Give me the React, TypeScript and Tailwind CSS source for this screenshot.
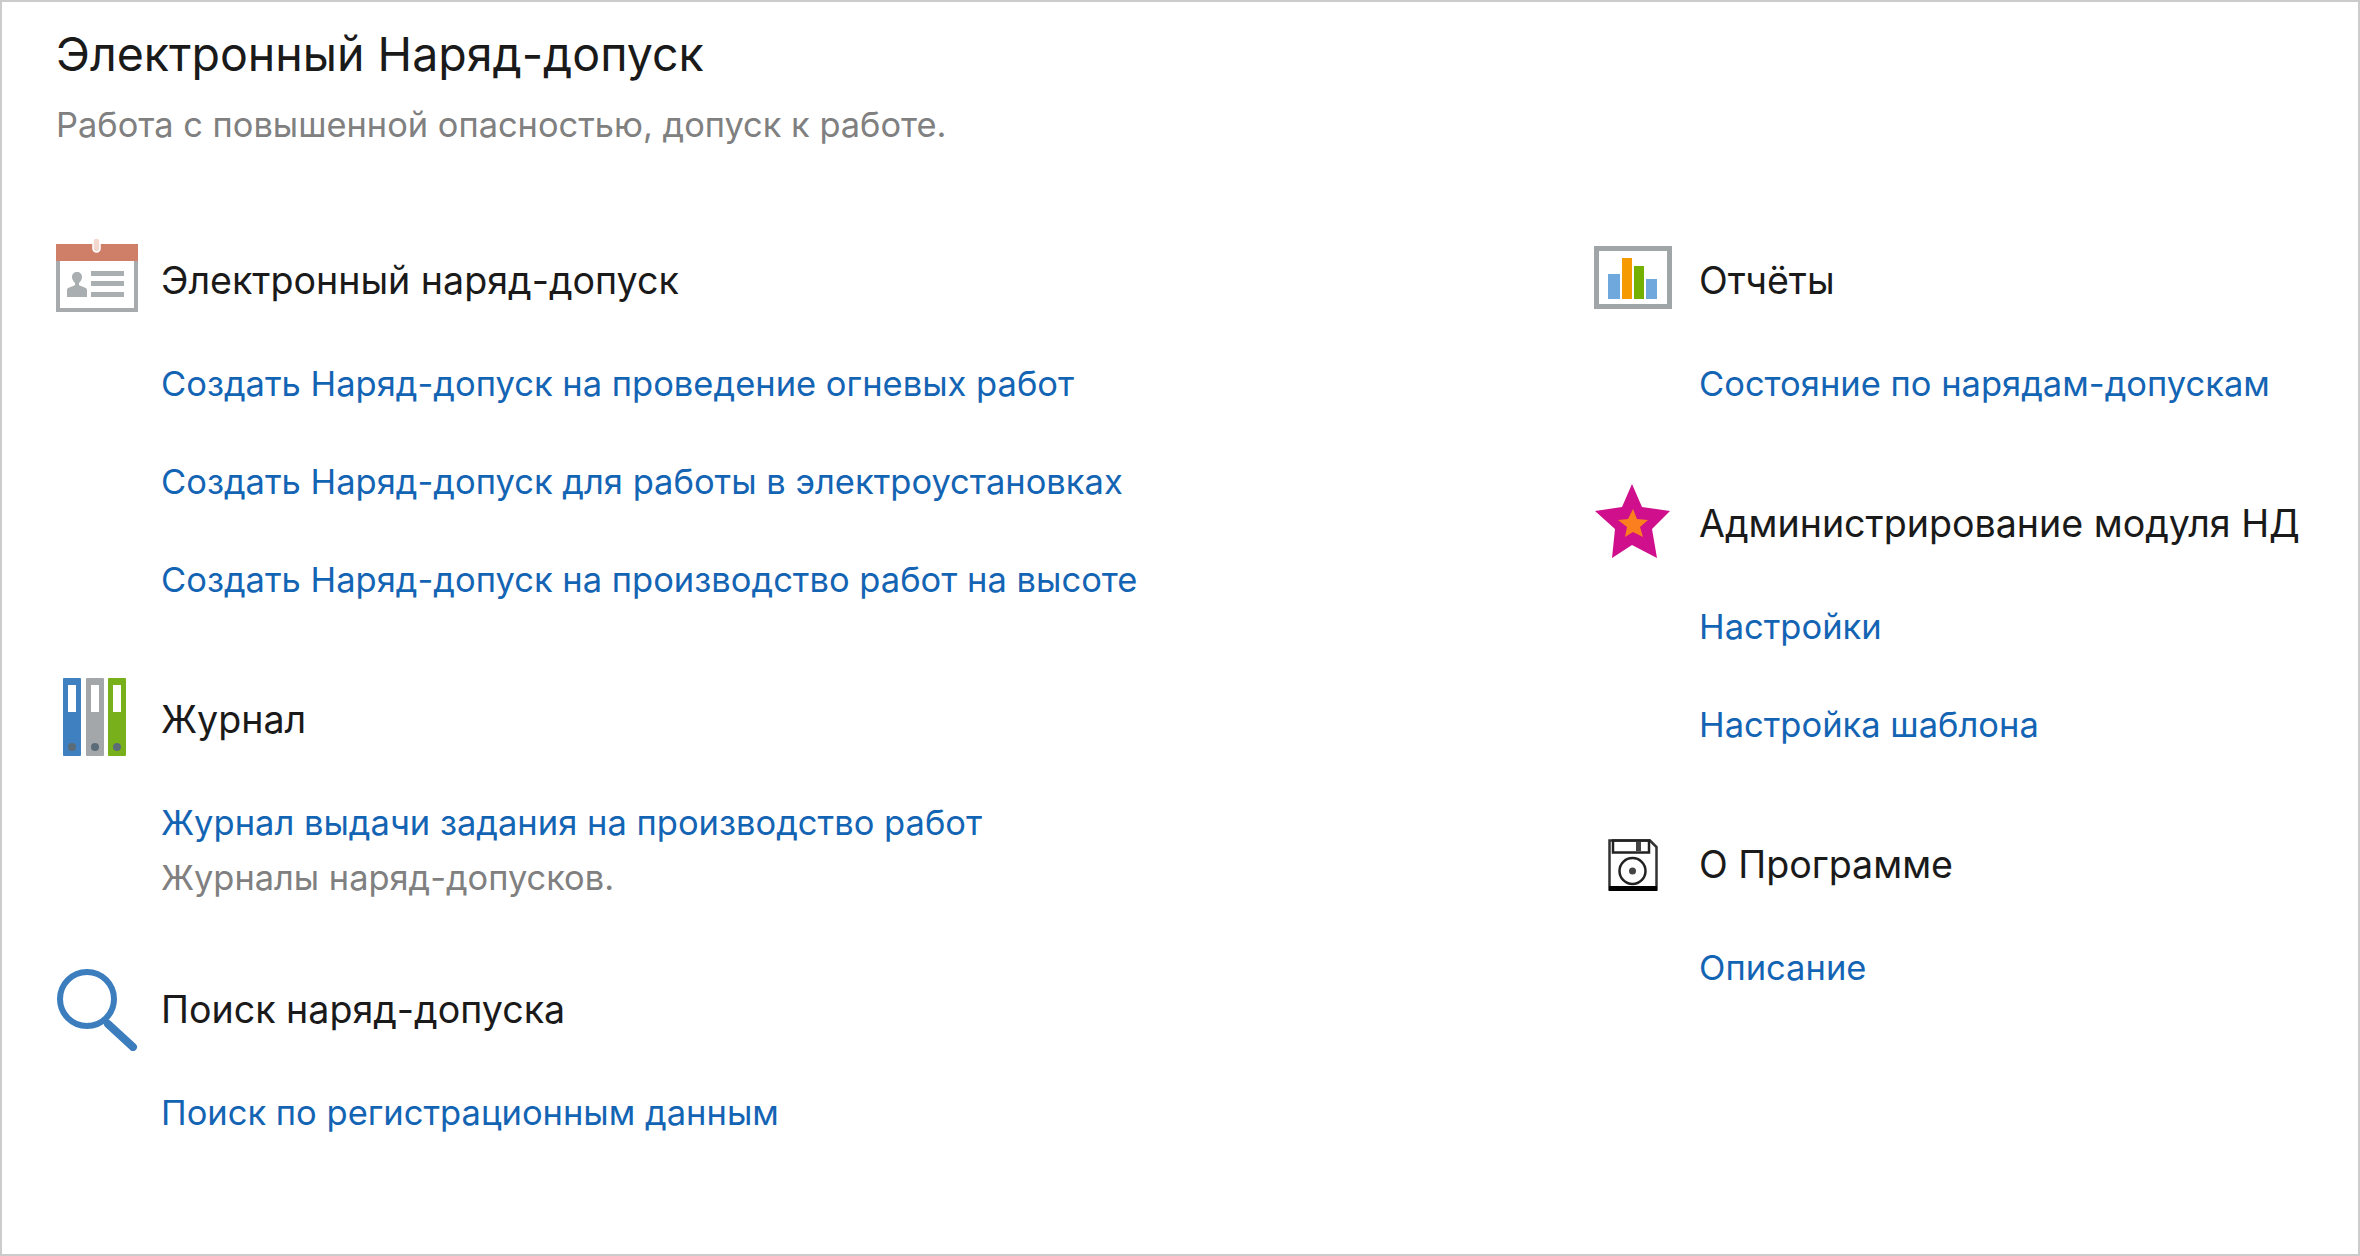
const font = { fontFamily: "Inter, sans-serif" };

function CardIcon() {
  return (
    <svg width="82" height="74" viewBox="0 0 82 74">
      <rect x="2" y="8" width="78" height="64" fill="#fff" stroke="#a7abad" strokeWidth="4" />
      <rect x="0" y="6" width="82" height="17" fill="#cf7f68" />
      <rect x="37" y="0" width="7" height="14" rx="3.5" fill="#f3d8d0" stroke="#fff" strokeWidth="1.5" />
      <path d="M11 59v-7c0-3 5-3 8-5v-2c-2-2-3-4-3-6 0-3 2-5 5-5s5 2 5 5c0 2-1 4-3 6v2c3 2 8 2 8 5v7z" fill="#a9aeb0" />
      <rect x="35" y="33" width="33" height="5" fill="#a9aeb0" />
      <rect x="35" y="43" width="33" height="5" fill="#a9aeb0" />
      <rect x="35" y="54" width="33" height="5" fill="#a9aeb0" />
    </svg>
  );
}

function Binder({ color, x }: { color: string; x: number }) {
  return (
    <g>
      <rect x={x} y="0" width="18" height="78" rx="1" fill={color} />
      <rect x={x + 5} y="7" width="8" height="27" fill="#fff" />
      <circle cx={x + 9} cy="69" r="4" fill="#5b6b78" />
    </g>
  );
}

function BindersIcon() {
  return (
    <svg width="63" height="78" viewBox="0 0 63 78">
      <Binder color="#3f80c0" x={0} />
      <Binder color="#a4a7a9" x={23} />
      <Binder color="#78b01c" x={45} />
    </svg>
  );
}

function SearchIcon() {
  return (
    <svg width="82" height="82" viewBox="0 0 82 82" fill="none">
      <circle cx="31" cy="30" r="27" stroke="#3c7dbd" strokeWidth="6" />
      <path d="M52 55l25 23" stroke="#3c7dbd" strokeWidth="8" strokeLinecap="round" />
    </svg>
  );
}

function ChartIcon() {
  return (
    <svg width="78" height="63" viewBox="0 0 78 63">
      <rect x="2.5" y="2.5" width="73" height="58" fill="#fff" stroke="#a0a5a8" strokeWidth="5" />
      <rect x="14" y="28" width="12" height="25" fill="#6fa8dc" />
      <rect x="28" y="12" width="10" height="41" fill="#f59a00" />
      <rect x="40" y="20" width="10" height="33" fill="#73b000" />
      <rect x="52" y="33" width="11" height="20" fill="#6fa8dc" />
    </svg>
  );
}

function StarIcon() {
  return (
    <svg width="75" height="74" viewBox="0 0 75 74">
      <path d="M37 0L47 23L75 27L57 45L62 74L37 61L17 74L20 45L0 27L27 23Z" fill="#cf0f8b" />
      <path d="M38 25L42 35L53 36L45 43L48 53L38 48L30 53L32 43L23 36L33 35Z" fill="#fb7f1e" />
    </svg>
  );
}

function FloppyIcon() {
  return (
    <svg width="50" height="52" viewBox="0 0 50 52" fill="none">
      <path d="M1.5 1.5H42L48.5 8V50.5H1.5Z" fill="#fff" stroke="#333" strokeWidth="2.5" />
      <rect x="1" y="47" width="48" height="5" fill="#000" />
      <rect x="5" y="1.5" width="36" height="12" stroke="#222" strokeWidth="2.5" />
      <rect x="28" y="3" width="5" height="9" fill="#444" />
      <circle cx="24.5" cy="32" r="13" stroke="#222" strokeWidth="2.5" />
      <circle cx="24.5" cy="32" r="3.5" fill="#444" />
    </svg>
  );
}

function Section({
  icon,
  title,
  links,
  note,
  className,
}: {
  icon: React.ReactNode;
  title: string;
  links: string[];
  note?: string;
  className?: string;
}) {
  return (
    <section className={className}>
      <div className="flex items-center h-[80px]">
        <div className="w-[105px] flex-none flex items-center">{icon}</div>
        <h2 className="text-[37.6px] leading-[50px] text-[#1a1a1a] whitespace-nowrap">{title}</h2>
      </div>
      <div className="pl-[105px]">
        {links.map((l, i) => (
          <a key={l} href="#" className={`block text-[34.5px] leading-[48px] text-[#1464b4] whitespace-nowrap ${i > 0 ? "mt-[50px]" : "mt-[39px]"}`}>
            {l}
          </a>
        ))}
        {note && <p className="text-[34.4px] leading-[46px] text-[#808080] mt-[8px]">{note}</p>}
      </div>
    </section>
  );
}

export default function App() {
  return (
    <div style={font} className="w-[2360px] h-[1256px] bg-white border-2 border-[#cccccc] pl-[54px] pr-[40px] pt-[25px] overflow-hidden">
      <h1 className="text-[46.5px] leading-[54px] text-[#1a1a1a]">Электронный Наряд-допуск</h1>
      <p className="text-[34.4px] leading-[46px] text-[#808080] mt-[21px]">Работа с повышенной опасностью, допуск к работе.</p>
      <div className="flex mt-[93px]">
        <div className="w-[1538px] flex-none">
          <Section
            icon={<div className="mb-[12px]"><CardIcon /></div>}
            title="Электронный наряд-допуск"
            links={[
              "Создать Наряд-допуск на проведение огневых работ",
              "Создать Наряд-допуск для работы в электроустановках",
              "Создать Наряд-допуск на производство работ на высоте",
            ]}
          />
          <Section
            className="mt-[76px]"
            icon={<div className="mb-[6px] ml-[7px]"><BindersIcon /></div>}
            title="Журнал"
            links={["Журнал выдачи задания на производство работ"]}
            note="Журналы наряд-допусков."
          />
          <Section
            className="mt-[69px]"
            icon={<SearchIcon />}
            title="Поиск наряд-допуска"
            links={["Поиск по регистрационным данным"]}
          />
        </div>
        <div className="flex-1">
          <Section
            icon={<div className="mb-[8px]"><ChartIcon /></div>}
            title="Отчёты"
            links={["Состояние по нарядам-допускам"]}
          />
          <Section
            className="mt-[76px]"
            icon={<div className="mb-[6px] ml-[1px]"><StarIcon /></div>}
            title="Администрирование модуля НД"
            links={["Настройки", "Настройка шаблона"]}
          />
          <Section
            className="mt-[76px]"
            icon={<div className="pl-[14px]"><FloppyIcon /></div>}
            title="О Программе"
            links={["Описание"]}
          />
        </div>
      </div>
    </div>
  );
}
